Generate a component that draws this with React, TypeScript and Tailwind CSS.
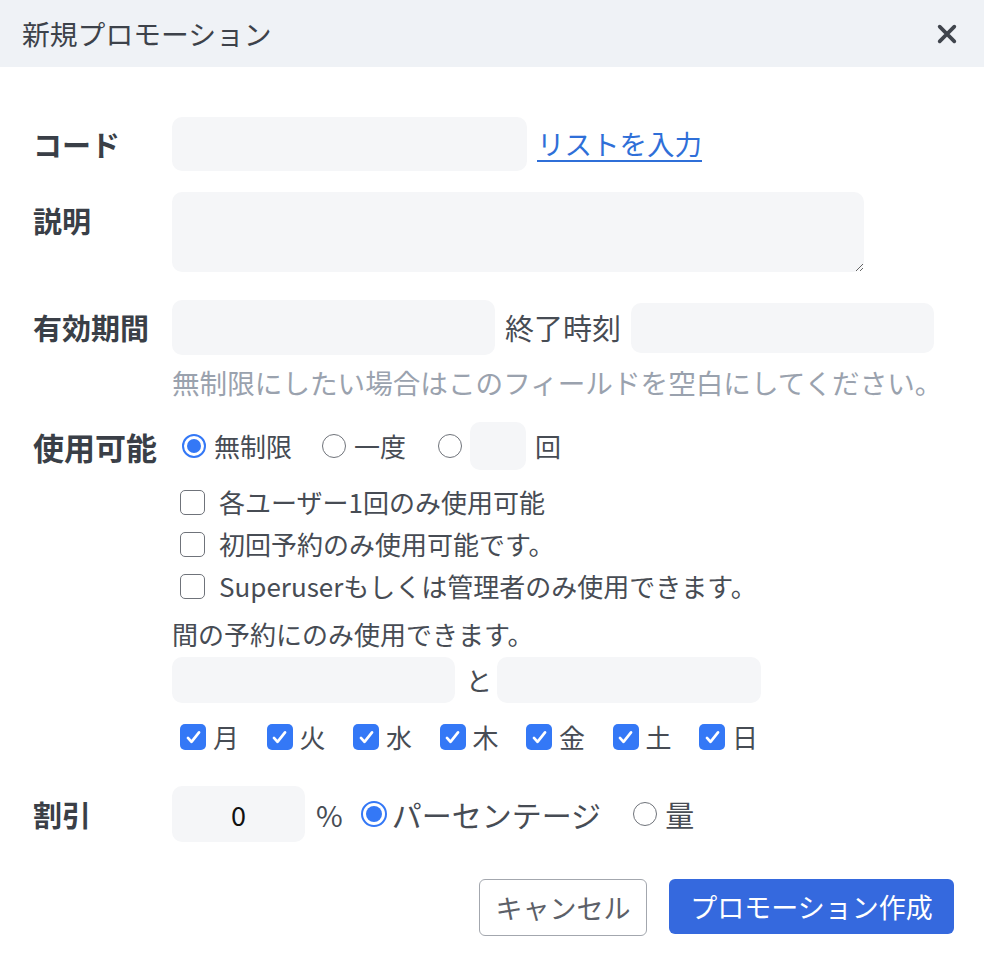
import React from 'react';

const Radio: React.FC<{ checked?: boolean; size?: string }> = ({ checked, size = 'w-[24px] h-[24px]' }) =>
    checked ? (
        <span className={`${size} shrink-0 rounded-full border-2 border-[#3478f6] p-[3px] flex`}>
            <span className="flex-1 rounded-full bg-[#3478f6]"></span>
        </span>
    ) : (
        <span className={`${size} shrink-0 rounded-full border-[1.5px] border-[#6f737a] bg-white`}></span>
    );

const Checkbox: React.FC<{ checked?: boolean }> = ({ checked }) =>
    checked ? (
        <span className="w-[26px] h-[26px] shrink-0 rounded-[5px] bg-[#3478f6] flex items-center justify-center">
            <svg viewBox="0 0 24 24" className="w-[19px] h-[19px]" fill="none" stroke="white" strokeWidth="3.4" strokeLinecap="round" strokeLinejoin="round">
                <path d="M5 12.5l4.5 5L19 5.5" />
            </svg>
        </span>
    ) : (
        <span className="w-[25px] h-[25px] shrink-0 rounded-[5px] border-[1.5px] border-[#6f737a] bg-white"></span>
    );

const inputBase = 'bg-[#f5f6f8] rounded-[10px] outline-none';

const App: React.FC = () => {
    const days = ['月', '火', '水', '木', '金', '土', '日'];
    const options = [
        '各ユーザー1回のみ使用可能',
        '初回予約のみ使用可能です。',
        'Superuserもしくは管理者のみ使用できます。',
    ];

    return (
        <div className="w-[984px] h-[971px] bg-white text-[#474c54] font-['Noto_Sans_CJK_JP','Noto_Sans',sans-serif]">
            {/* ヘッダー */}
            <div className="h-[67px] bg-[#eff2f6] flex items-center justify-between pl-[22px] pr-[26px]">
                <h1 className="text-[27.8px] leading-none text-[#3d424a]">新規プロモーション</h1>
                <svg viewBox="0 0 24 24" className="w-[22px] h-[22px]" fill="none" stroke="#40454d" strokeWidth="4" strokeLinecap="round">
                    <path d="M4 4l16 16M20 4L4 20" />
                </svg>
            </div>

            <div className="pl-[33px] pr-[30px]">
                {/* コード */}
                <div className="mt-[50px] flex items-center">
                    <label className="w-[139px] shrink-0 text-[29px] font-bold text-[#3a3f47] leading-none">コード</label>
                    <input className={`${inputBase} w-[355px] h-[54px]`} />
                    <a href="#" className="ml-[10px] text-[27.5px] leading-none text-[#2f6fd8] underline underline-offset-[5px]">
                        リストを入力
                    </a>
                </div>

                {/* 説明 */}
                <div className="mt-[21px] flex items-start">
                    <label className="w-[139px] shrink-0 text-[29px] font-bold text-[#3a3f47] leading-[36px] pt-[10px]">説明</label>
                    <textarea className={`${inputBase} w-[692px] h-[80px]`}></textarea>
                </div>

                {/* 有効期間 */}
                <div className="mt-[28px] flex items-center">
                    <label className="w-[139px] shrink-0 text-[29px] font-bold text-[#3a3f47] leading-none">有効期間</label>
                    <input className={`${inputBase} w-[323px] h-[55px]`} />
                    <span className="mx-[10px] text-[29px] leading-none">終了時刻</span>
                    <input className={`${inputBase} w-[303px] h-[50px]`} />
                </div>
                <p className="mt-[10px] ml-[139px] text-[27.6px] leading-[35px] text-[#9aa2ae] whitespace-nowrap">
                    無制限にしたい場合はこのフィールドを空白にしてください。
                </p>

                {/* 使用可能 */}
                <div className="mt-[22px] flex items-center">
                    <label className="w-[139px] shrink-0 text-[31px] font-bold text-[#3a3f47] leading-none">使用可能</label>
                    <div className="flex items-center text-[26px] leading-none">
                        <span className="ml-[10px] flex items-center gap-[8px]">
                            <Radio checked />
                            無制限
                        </span>
                        <span className="ml-[30px] flex items-center gap-[8px]">
                            <Radio />
                            一度
                        </span>
                        <span className="ml-[32px] flex items-center gap-[8px]">
                            <Radio />
                            <input className={`${inputBase} w-[56px] h-[48px]`} />
                        </span>
                        <span className="ml-[9px]">回</span>
                    </div>
                </div>

                <div className="ml-[139px]">
                    {/* オプション */}
                    <div className="mt-[11px] flex flex-col">
                        {options.map((text) => (
                            <div key={text} className="h-[42px] flex items-center text-[26px] leading-none">
                                <span className="ml-[8px] mr-[14px] flex">
                                    <Checkbox />
                                </span>
                                {text}
                            </div>
                        ))}
                    </div>

                    <p className="mt-[9px] text-[26px] leading-[36px]">間の予約にのみ使用できます。</p>
                    <div className="mt-[5px] flex items-center">
                        <input className={`${inputBase} w-[283px] h-[46px]`} />
                        <span className="ml-[11px] mr-[5px] text-[26px] leading-none">と</span>
                        <input className={`${inputBase} w-[264px] h-[46px]`} />
                    </div>

                    {/* 曜日 */}
                    <div className="mt-[16px] h-[36px] ml-[8px] flex items-center">
                        {days.map((d) => (
                            <span key={d} className="w-[86.5px] flex items-center gap-[7px] text-[26px] leading-none">
                                <Checkbox checked />
                                {d}
                            </span>
                        ))}
                    </div>
                </div>

                {/* 割引 */}
                <div className="mt-[31px] flex items-center">
                    <label className="w-[139px] shrink-0 text-[29px] font-bold text-[#3a3f47] leading-none">割引</label>
                    <input
                        className={`${inputBase} w-[133px] h-[56px] text-center text-[27px] text-[#111]`}
                        defaultValue="0"
                    />
                    <span className="ml-[11px] text-[29px] leading-none">%</span>
                    <span className="ml-[18px] flex items-center gap-[5px] text-[30px] leading-none">
                        <Radio checked size="w-[26px] h-[26px]" />
                        パーセンテージ
                    </span>
                    <span className="ml-[32px] flex items-center gap-[8px] text-[29px] leading-none">
                        <Radio />
                        量
                    </span>
                </div>

                {/* ボタン */}
                <div className="mt-[37px] flex justify-end items-start gap-[22px]">
                    <button className="w-[168px] h-[57px] rounded-[6px] border-[1.5px] border-[#a3a7ae] bg-white text-[27px] text-[#5c6068] leading-none">
                        キャンセル
                    </button>
                    <button className="w-[285px] h-[55px] rounded-[6px] bg-[#3569de] text-[27px] text-white leading-none">
                        プロモーション作成
                    </button>
                </div>
            </div>
        </div>
    );
};

export default App;
